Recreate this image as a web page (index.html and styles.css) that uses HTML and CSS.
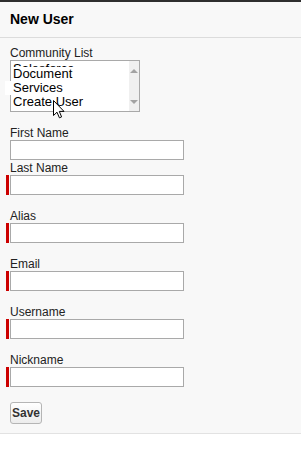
FILE: index.html
```html
<!DOCTYPE html>
<html lang="en">
<head>
  <meta charset="UTF-8">
  <title>New User</title>
  <link rel="stylesheet" href="styles.css">
</head>
<body>

  <div class="panel">
    <!-- Header -->
    <div class="panel-header">
      <h1>New User</h1>
    </div>

    <!-- Form -->
    <form class="user-form">
      <div class="field">
        <label>Community List</label>
        <div class="listbox">
          <div class="options">
            <div class="peek"><span>Salesforce</span></div>
            <div class="option">Document</div>
            <div class="option glitch">Services</div>
            <div class="option">Create User</div>
          </div>
          <div class="scrollbar">
            <span class="arrow up"></span>
            <span class="arrow down"></span>
          </div>
          <svg class="cursor" width="12" height="19" viewBox="0 0 12 19">
            <path d="M0.5 0.5 L0.5 15.5 L4 12.2 L6.4 17.8 L8.6 16.9 L6.3 11.4 L11 11.4 Z" fill="#fff" stroke="#000" stroke-width="1"/>
          </svg>
        </div>
      </div>

      <div class="field tight">
        <label>First Name</label>
        <input type="text">
      </div>

      <div class="field">
        <label>Last Name</label>
        <div class="required"><input type="text"></div>
      </div>

      <div class="field">
        <label>Alias</label>
        <div class="required"><input type="text"></div>
      </div>

      <div class="field">
        <label>Email</label>
        <div class="required"><input type="text"></div>
      </div>

      <div class="field">
        <label>Username</label>
        <div class="required"><input type="text"></div>
      </div>

      <div class="field last">
        <label>Nickname</label>
        <div class="required"><input type="text"></div>
      </div>

      <div class="actions">
        <button type="button">Save</button>
      </div>
    </form>
  </div>

</body>
</html>
```

FILE: styles.css
```css
* {
  margin: 0;
  padding: 0;
  box-sizing: border-box;
}
body {
  font-family: Arial, "Liberation Sans", sans-serif;
  background-color: #ffffff;
  color: #222;
}
.panel {
  background-color: #f8f8f8;
  border-top: 2px solid #2e2e2e;
  border-bottom: 1px solid #e2e2e2;
}
.panel-header {
  padding: 9px 10px 9px 10px;
  border-bottom: 1px solid #dcdcdc;
}
.panel-header h1 {
  font-size: 14px;
  line-height: 17px;
  font-weight: bold;
  color: #000;
}
.user-form {
  padding: 8px 10px 9px 10px;
}
.field {
  margin-bottom: 14px;
}
.field.tight {
  margin-bottom: 1px;
}
.field.last {
  margin-bottom: 15px;
}
.field label {
  display: block;
  font-size: 12px;
  line-height: 14px;
  color: #222;
}
.field input {
  display: block;
  width: 174px;
  height: 20px;
  border: 1px solid #a9a9a9;
  background: #fff;
}
.required {
  margin-left: -4px;
  padding-left: 1px;
  border-left: 3px solid #c00;
}

/* Community list box */
.listbox {
  position: relative;
  display: flex;
  width: 130px;
  height: 52px;
  border: 1px solid #a9a9a9;
  background: #fff;
}
.options {
  flex: 1;
  font-size: 13px;
  line-height: 14px;
  color: #000;
}
.peek {
  height: 6px;
  overflow: hidden;
  padding-left: 2px;
}
.peek span {
  display: block;
  margin-top: 1px;
}
.option {
  padding-left: 2px;
  height: 14px;
  white-space: nowrap;
}
.glitch {
  position: relative;
  z-index: 1;
  margin-left: -6px;
  padding-left: 8px;
  width: 124px;
  background: #fff;
}
.scrollbar {
  width: 17px;
  background: #f0f0f0;
  display: flex;
  flex-direction: column;
  justify-content: space-between;
  align-items: center;
  padding: 8px 0 7px 0;
}
.arrow {
  width: 0;
  height: 0;
  border-left: 4px solid transparent;
  border-right: 4px solid transparent;
}
.arrow.up {
  border-bottom: 4px solid #a3a3a3;
}
.arrow.down {
  border-top: 4px solid #a3a3a3;
}
.cursor {
  position: absolute;
  left: 42px;
  top: 39px;
  z-index: 2;
}

/* Save */
.actions button {
  font-family: Arial, "Liberation Sans", sans-serif;
  font-size: 12px;
  font-weight: bold;
  color: #333;
  width: 32px;
  height: 22px;
  border: 1px solid #b5b5b5;
  border-radius: 3px;
  background: linear-gradient(#ffffff, #ececec);
  cursor: pointer;
}
```
